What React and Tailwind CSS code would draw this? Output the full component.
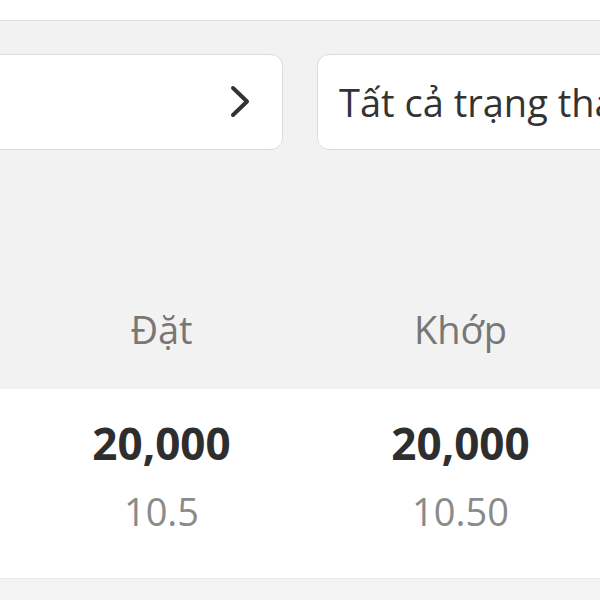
export default function App() {
  const cols = [
    { label: "Đặt", qty: "20,000", price: "10.5" },
    { label: "Khớp", qty: "20,000", price: "10.50" },
  ];

  return (
    <div className="w-[600px] h-[600px] overflow-hidden bg-white font-['Open_Sans',sans-serif]">
      <div className="h-[20px] bg-white" />

      {/* filters + table head */}
      <div className="h-[369px] border-t border-[#dedede] bg-[#f2f2f2] flex flex-col">
        <div className="flex gap-[34px] pt-[33px] ml-[-17px]">
          <div className="w-[300px] h-[96px] shrink-0 bg-white border border-[#dcdcdc] rounded-[12px] flex items-center justify-end pr-[30px]">
            <svg width="24" height="36" viewBox="0 0 24 36" fill="none">
              <path
                d="M5 4 L19 17.5 L5 31"
                stroke="#333"
                strokeWidth="4"
                strokeLinecap="round"
                strokeLinejoin="round"
              />
            </svg>
          </div>
          <div className="w-[320px] h-[96px] shrink-0 bg-white border border-[#dcdcdc] rounded-[12px] flex items-center pl-[21px] overflow-hidden">
            <span className="text-[38px] text-[#333] whitespace-nowrap leading-none">
              Tất cả trạng thái
            </span>
          </div>
        </div>

        <div className="flex pl-[12px] mt-auto h-[118px] items-center">
          {cols.map((c) => (
            <div key={c.label} className="w-[299px] shrink-0 text-center">
              <span className="text-[38px] text-[#777] leading-none">{c.label}</span>
            </div>
          ))}
        </div>
      </div>

      {/* row */}
      <div className="h-[189px] bg-white flex pl-[12px] pt-[28px]">
        {cols.map((c) => (
          <div key={c.label} className="w-[299px] shrink-0 flex flex-col items-center">
            <span className="text-[44px] font-bold text-[#2e2e2e] leading-[1.2]">{c.qty}</span>
            <span className="text-[38px] text-[#8a8a8a] leading-[1.2] mt-[19px]">{c.price}</span>
          </div>
        ))}
      </div>

      <div className="h-[30px] border-t border-[#ececec] bg-[#f3f3f3]" />
    </div>
  );
}
